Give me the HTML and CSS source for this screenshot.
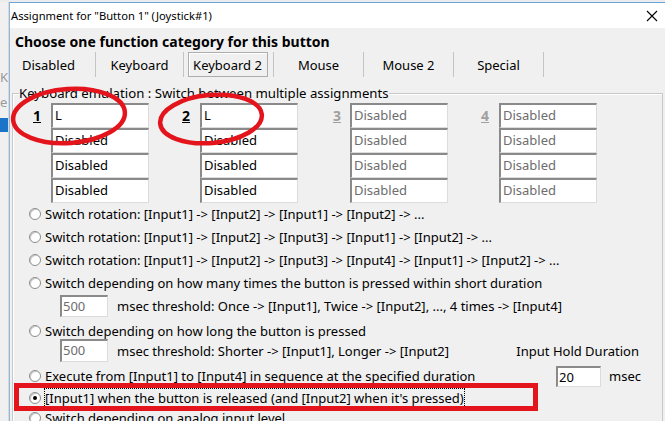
FILE: index.html
```html
<!DOCTYPE html>
<html>
<head>
<meta charset="utf-8">
<link rel="stylesheet" href="styles.css">
</head>
<body>
<div class="screen">
  <div class="backwin">
    <span class="bw-k">K</span>
    <span class="bw-e">e</span>
    <div class="bw-sel"></div>
  </div>
  <div class="dialog">
    <div class="titlebar">
      <span class="title">Assignment for "Button 1" (Joystick#1)</span>
      <svg class="close" width="12" height="12" viewBox="0 0 12 12"><path d="M1 1 L11 11 M11 1 L1 11" stroke="#000" stroke-width="1.1" fill="none"/></svg>
    </div>
    <div class="body">
      <div class="heading">Choose one function category for this button</div>
      <div class="tabs">
        <div class="tab tab-first">Disabled</div>
        <div class="tab">Keyboard</div>
        <div class="tab"><span class="tab-sel">Keyboard 2</span></div>
        <div class="tab">Mouse</div>
        <div class="tab">Mouse 2</div>
        <div class="tab">Special</div>
      </div>
      <fieldset class="group">
        <legend class="legend">Keyboard emulation : Switch between multiple assignments</legend>
        <div class="slots">
          <div class="slot">
            <span class="slot-num">1</span>
            <div class="slot-inputs">
              <div class="field">L</div>
              <div class="field">Disabled</div>
              <div class="field">Disabled</div>
              <div class="field">Disabled</div>
            </div>
          </div>
          <div class="slot">
            <span class="slot-num">2</span>
            <div class="slot-inputs">
              <div class="field">L</div>
              <div class="field">Disabled</div>
              <div class="field">Disabled</div>
              <div class="field">Disabled</div>
            </div>
          </div>
          <div class="slot slot-off slot-3">
            <span class="slot-num">3</span>
            <div class="slot-inputs">
              <div class="field">Disabled</div>
              <div class="field">Disabled</div>
              <div class="field">Disabled</div>
              <div class="field">Disabled</div>
            </div>
          </div>
          <div class="slot slot-off slot-4">
            <span class="slot-num">4</span>
            <div class="slot-inputs">
              <div class="field">Disabled</div>
              <div class="field">Disabled</div>
              <div class="field">Disabled</div>
              <div class="field">Disabled</div>
            </div>
          </div>
        </div>
        <div class="options">
          <div class="opt opt-1"><span class="radio"></span><span>Switch rotation: [Input1] -&gt; [Input2] -&gt; [Input1] -&gt; [Input2] -&gt; ...</span></div>
          <div class="opt opt-2"><span class="radio"></span><span>Switch rotation: [Input1] -&gt; [Input2] -&gt; [Input3] -&gt; [Input1] -&gt; [Input2] -&gt; ...</span></div>
          <div class="opt opt-3"><span class="radio"></span><span>Switch rotation: [Input1] -&gt; [Input2] -&gt; [Input3] -&gt; [Input4] -&gt; [Input1] -&gt; [Input2] -&gt; ...</span></div>
          <div class="opt opt-4"><span class="radio"></span><span>Switch depending on how many times the button is pressed within short duration</span></div>
          <div class="sub sub-1"><div class="num-field">500</div><span>msec threshold: Once -&gt; [Input1], Twice -&gt; [Input2], ..., 4 times -&gt; [Input4]</span></div>
          <div class="opt opt-5"><span class="radio"></span><span>Switch depending on how long the button is pressed</span></div>
          <div class="sub sub-2"><div class="num-field">500</div><span>msec threshold: Shorter -&gt; [Input1], Longer -&gt; [Input2]</span><span class="hold-label">Input Hold Duration</span></div>
          <div class="opt opt-6"><span class="radio"></span><span>Execute from [Input1] to [Input4] in sequence at the specified duration</span><div class="hold"><div class="hold-field">20</div><span>msec</span></div></div>
          <div class="opt opt-7"><span class="radio radio-on"></span><span class="focus">[Input1] when the button is released (and [Input2] when it's pressed)</span></div>
          <div class="opt opt-8"><span class="radio"></span><span>Switch depending on analog input level</span></div>
        </div>
      </fieldset>
    </div>
  </div>
  <svg class="annot" width="665" height="421" viewBox="0 0 665 421">
    <ellipse cx="69" cy="116" rx="56" ry="27" transform="rotate(-4 69 116)" fill="none" stroke="#e3141c" stroke-width="4.5"/>
    <ellipse cx="211" cy="119" rx="51" ry="24" transform="rotate(-5 211 119)" fill="none" stroke="#e3141c" stroke-width="4.5"/>
    <rect x="16.5" y="385.5" width="519" height="23" fill="none" stroke="#e3141c" stroke-width="5"/>
  </svg>
</div>
</body>
</html>
```

FILE: styles.css
```css
* { box-sizing: border-box; }
html, body { margin: 0; padding: 0; }
body {
  font-family: "Noto Sans", "Open Sans", sans-serif;
  font-size: 13px;
  color: #000;
  background: #e9e9e9;
}
.screen {
  position: relative;
  width: 665px;
  height: 421px;
  overflow: hidden;
  display: flex;
  align-items: flex-start;
  padding-top: 2px;
  background: #ececec;
}
.backwin {
  position: relative;
  width: 9px;
  height: 419px;
  flex: none;
  background: #f0f0f0;
  border-right: 1px solid #d9d9d9;
  overflow: hidden;
  color: #9a9a9a;
  font-size: 13px;
}
.bw-k { position: absolute; left: 0; top: 66px; }
.bw-e { position: absolute; left: 0; top: 91px; }
.bw-sel { position: absolute; left: 0; top: 116px; width: 8px; height: 14px; background: #1c74c9; }
.dialog {
  flex: none;
  display: block;
  width: 700px;
  height: 419px;
  overflow: hidden;
  border-top: 1px solid #6aa3d8;
  border-left: 1px solid #8fb6dc;
  background: #f0f0f0;
}
.titlebar {
  height: 25px;
  background: #fff;
  display: flex;
  align-items: center;
  padding-left: 1px;
  position: relative;
}
.title { font-size: 11.2px; }
.close { position: absolute; left: 636px; top: 7px; }
.heading {
  font-weight: bold;
  font-size: 14px;
  height: 23px;
  line-height: 23px;
  padding-left: 5px;
  margin-top: 2px;
}
.tabs {
  display: flex;
  height: 25px;
  margin-top: -1px;
}
.tab {
  width: 90px;
  height: 25px;
  border-right: 1px solid #c4c4c4;
  display: flex;
  align-items: center;
  justify-content: center;
  font-size: 13px;
}
.tab-first { width: 86px; justify-content: flex-start; padding-left: 12px; }
.tab:nth-child(2) { width: 88px; }
.tab-sel {
  display: flex;
  align-items: center;
  justify-content: center;
  width: 80px;
  height: 25px;
  border: 1px solid #adadad;
  box-shadow: inset 1px 1px 0 #fff;
  margin-left: -2px;
}
.group {
  margin: 9px 0 0 2px;
  padding: 0;
  width: 651px;
  height: 400px;
  border: 1px solid #c8c8c8;
  box-shadow: inset 1px 1px 0 #fff;
  min-width: 0;
}
.legend {
  padding: 0;
  margin-left: 6px;
  font-size: 13.2px;
  line-height: 14px;
}
.slots {
  display: flex;
  padding-left: 20px;
  margin-top: 3px;
  gap: 33px;
}
.slot { display: flex; }
.slot-num {
  width: 18px;
  font-weight: bold;
  text-decoration: underline;
  font-size: 14px;
  padding-top: 3px;
}
.slot-3 .slot-num, .slot-4 .slot-num { color: #a0a0a0; }
.slot-3 .slot-num { padding-left: 1px; }
.slot-3 { margin-left: 1px; }
.slot-inputs { display: flex; flex-direction: column; }
.field {
  width: 98px;
  height: 25px;
  background: #fff;
  border-top: 2px solid #8a8a8a;
  border-left: 2px solid #8a8a8a;
  border-right: 1px solid #dcdcdc;
  border-bottom: 1px solid #dcdcdc;
  padding-left: 2px;
  line-height: 21px;
  font-size: 13px;
}
.slot-off .field { color: #6d6d6d; }
.options { display: flex; flex-direction: column; padding-left: 16px; }
.opt { display: flex; align-items: center; height: 20px; }
.radio {
  width: 12px;
  height: 12px;
  border-radius: 50%;
  background: #fff;
  border: 1px solid #8d8d8d;
  box-shadow: inset 1px 1px 0 #c8c8c8;
  margin-right: 4px;
  flex: none;
  position: relative;
}
.radio-on::after {
  content: "";
  position: absolute;
  left: 3px; top: 3px;
  width: 4px; height: 4px;
  border-radius: 50%;
  background: #000;
}
.opt-1 { margin-top: 1px; }
.opt-2 { margin-top: 3px; }
.opt-3 { margin-top: 3px; }
.opt-4 { margin-top: 3px; }
.sub { display: flex; align-items: center; padding-left: 31px; }
.sub-1 { margin-top: 2px; height: 22px; }
.opt-5 { margin-top: 4px; }
.sub-2 { margin-top: -2px; height: 23px; }
.opt-6 { margin-top: 4px; }
.opt-7 { margin-top: 2px; }
.opt-8 { margin-top: 0; }
.num-field {
  width: 48px;
  height: 100%;
  background: #fff;
  border-top: 2px solid #8a8a8a;
  border-left: 2px solid #8a8a8a;
  border-right: 1px solid #dcdcdc;
  border-bottom: 1px solid #dcdcdc;
  color: #6d6d6d;
  padding-left: 1px;
  line-height: 19px;
  margin-right: 9px;
}
.hold-label { margin-left: auto; margin-right: 23px; }
.hold { display: flex; align-items: center; margin-left: auto; margin-right: 21px; gap: 8px; }
.hold-field {
  width: 45px;
  height: 21px;
  background: #fff;
  border-top: 2px solid #8a8a8a;
  border-left: 2px solid #8a8a8a;
  border-right: 1px solid #dcdcdc;
  border-bottom: 1px solid #dcdcdc;
  padding-left: 1px;
  line-height: 18px;
}
.focus { outline: 1px dotted #000; outline-offset: 0; }
.annot { position: absolute; left: 0; top: 0; pointer-events: none; }
```
